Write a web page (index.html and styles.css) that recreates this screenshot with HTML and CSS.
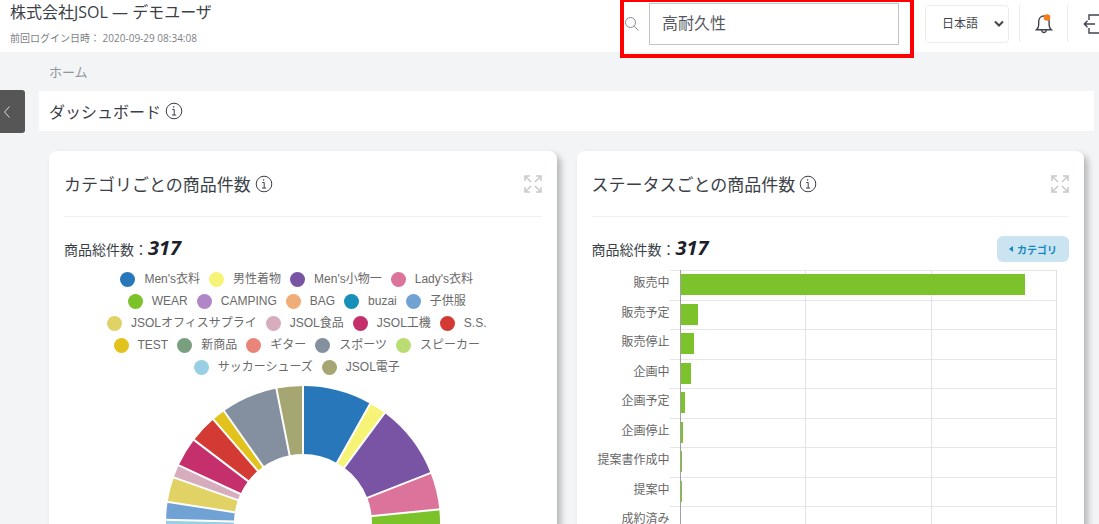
FILE: index.html
```html
<!DOCTYPE html>
<html lang="ja">
<head>
<meta charset="utf-8">
<title>ダッシュボード</title>
<link rel="stylesheet" href="styles.css">
</head>
<body>
<header class="topbar">
  <div class="brand">
    <div class="brand-name">株式会社JSOL — デモユーザ</div>
    <div class="last-login">前回ログイン日時： 2020-09-29 08:34:08</div>
  </div>
  <form class="search">
    <label for="q" aria-label="検索"><svg class="search-icon" width="16" height="16" viewBox="0 0 16 16"><circle cx="6.500" cy="6.500" r="5"/><path d="M10.200 10.200 14.500 14.500"/></svg></label>
    <input id="q" class="search-input" type="text" value="高耐久性">
  </form>
  <div class="lang">
    <select class="lang-select" aria-label="言語"><option>日本語</option></select>
    <svg class="lang-arrow" width="10" height="8" viewBox="0 0 10 8"><path d="M1 1.500 5 5.500 9 1.500"/></svg>
  </div>
  <button class="icon-btn bell" type="button" aria-label="通知">
    <svg width="18" height="20" viewBox="0 0 18 20"><path d="M1.500 15.800h14.800c-1.600-1.300-2.200-3-2.200-5V7.500c0-3-2-5.500-5.200-5.500S3.700 4.500 3.700 7.500v3.300c0 2-.6 3.700-2.200 5z"/><path d="M6.500 16c.2 1.600 1.100 2.500 2.400 2.500s2.200-.9 2.400-2.500"/><circle class="dot" cx="12" cy="3.500" r="3.300"/></svg>
  </button>
  <button class="icon-btn logout" type="button" aria-label="ログアウト">
    <svg width="26" height="20" viewBox="0 0 26 20"><path d="M6 6V1h18v18H6v-5"/><path d="M1.500 10H12M4.500 6.800 1.300 10l3.200 3.200"/></svg>
  </button>
</header>
<div class="layout">
  <aside class="side"><button class="side-toggle" type="button" aria-label="メニュー"><svg width="8" height="14" viewBox="0 0 8 14"><path d="M6.500 1.500 1.500 7l5 5.500"/></svg></button></aside>
  <main class="main">
    <nav class="crumb"><a href="#">ホーム</a></nav>
    <h1 class="page-title">ダッシュボード
      <svg class="info" width="18" height="18" viewBox="0 0 18 18"><circle cx="9" cy="9" r="7.800"/><path d="M7.300 7.500H9.200V13M7 13h4.200M8.700 4.200v1.600"/></svg></h1>
    <div class="cards">
      <section class="card">
        <div class="card-head">
          <h2>カテゴリごとの商品件数
            <svg class="info" width="18" height="18" viewBox="0 0 18 18"><circle cx="9" cy="9" r="7.800"/><path d="M7.300 7.500H9.200V13M7 13h4.200M8.700 4.200v1.600"/></svg></h2>
          <button class="expand" type="button" aria-label="拡大"><svg width="18" height="18" viewBox="0 0 18 18"><path d="M7 7 1 1M1 6V1h5M11 7l6-6M12 1h5v5M7 11l-6 6M1 12v5h5M11 11l6 6M12 17h5v-5"/></svg></button>
        </div>
        <div class="total"><p>商品総件数：<strong>317</strong></p></div>
        <ul class="legend">
          <li class="c1">Men's衣料</li><li class="c2">男性着物</li><li class="c3">Men's小物一</li><li class="c4">Lady's衣料</li>
          <li class="c5">WEAR</li><li class="c6">CAMPING</li><li class="c7">BAG</li><li class="c8">buzai</li><li class="c9">子供服</li>
          <li class="c10">JSOLオフィスサプライ</li><li class="c11">JSOL食品</li><li class="c12">JSOL工機</li><li class="c13">S.S.</li>
          <li class="c14">TEST</li><li class="c15">新商品</li><li class="c16">ギター</li><li class="c17">スポーツ</li><li class="c18">スピーカー</li>
          <li class="c19">サッカーシューズ</li><li class="c20">JSOL電子</li>
        </ul>
        <svg class="donut" width="276" height="276" viewBox="-138 -138 276 276" role="img" aria-label="カテゴリごとの商品件数">
          <g class="slices" transform="rotate(-90)">
            <circle class="c1" r="103" pathLength="360" stroke-dasharray="29.400 360"/>
            <circle class="c2" r="103" pathLength="360" stroke-dasharray="7.200 360" transform="rotate(29.400)"/>
            <circle class="c3" r="103" pathLength="360" stroke-dasharray="32 360" transform="rotate(36.600)"/>
            <circle class="c4" r="103" pathLength="360" stroke-dasharray="15.700 360" transform="rotate(68.600)"/>
            <circle class="c5" r="103" pathLength="360" stroke-dasharray="60 360" transform="rotate(84.300)"/>
            <circle class="c6" r="103" pathLength="360" stroke-dasharray="50 360" transform="rotate(144.300)"/>
            <circle class="c7" r="103" pathLength="360" stroke-dasharray="74 360" transform="rotate(194.300)"/>
            <circle class="c19" r="103" pathLength="360" stroke-dasharray="3 360" transform="rotate(268.300)"/>
            <circle class="c9" r="103" pathLength="360" stroke-dasharray="7.600 360" transform="rotate(271.300)"/>
            <circle class="c10" r="103" pathLength="360" stroke-dasharray="10.500 360" transform="rotate(278.900)"/>
            <circle class="c11" r="103" pathLength="360" stroke-dasharray="5.500 360" transform="rotate(289.400)"/>
            <circle class="c12" r="103" pathLength="360" stroke-dasharray="12.400 360" transform="rotate(294.900)"/>
            <circle class="c13" r="103" pathLength="360" stroke-dasharray="11.800 360" transform="rotate(307.300)"/>
            <circle class="c14" r="103" pathLength="360" stroke-dasharray="5.700 360" transform="rotate(319.100)"/>
            <circle class="c17" r="103" pathLength="360" stroke-dasharray="24 360" transform="rotate(324.800)"/>
            <circle class="c20" r="103" pathLength="360" stroke-dasharray="11.200 360" transform="rotate(348.800)"/>
          </g>
          <g class="cuts">
            <path d="M0-60V-138"/>
            <path d="M0-60V-138" transform="rotate(29.400)"/>
            <path d="M0-60V-138" transform="rotate(36.600)"/>
            <path d="M0-60V-138" transform="rotate(68.600)"/>
            <path d="M0-60V-138" transform="rotate(84.300)"/>
            <path d="M0-60V-138" transform="rotate(144.300)"/>
            <path d="M0-60V-138" transform="rotate(194.300)"/>
            <path d="M0-60V-138" transform="rotate(271.300)"/>
            <path d="M0-60V-138" transform="rotate(278.900)"/>
            <path d="M0-60V-138" transform="rotate(289.400)"/>
            <path d="M0-60V-138" transform="rotate(294.900)"/>
            <path d="M0-60V-138" transform="rotate(307.300)"/>
            <path d="M0-60V-138" transform="rotate(319.100)"/>
            <path d="M0-60V-138" transform="rotate(324.800)"/>
            <path d="M0-60V-138" transform="rotate(348.800)"/>
          </g>
        </svg>
      </section>
      <section class="card">
        <div class="card-head">
          <h2>ステータスごとの商品件数
            <svg class="info" width="18" height="18" viewBox="0 0 18 18"><circle cx="9" cy="9" r="7.800"/><path d="M7.300 7.500H9.200V13M7 13h4.200M8.700 4.200v1.600"/></svg></h2>
          <button class="expand" type="button" aria-label="拡大"><svg width="18" height="18" viewBox="0 0 18 18"><path d="M7 7 1 1M1 6V1h5M11 7l6-6M12 1h5v5M7 11l-6 6M1 12v5h5M11 11l6 6M12 17h5v-5"/></svg></button>
        </div>
        <div class="total"><p>商品総件数：<strong>317</strong></p>
          <button class="back" type="button"><svg width="4" height="6" viewBox="0 0 4 6"><path d="M4 0v6L0 3z"/></svg>カテゴリ</button></div>
        <div class="bars">
          <div class="labels">
            <span>販売中</span><span>販売予定</span><span>販売停止</span><span>企画中</span><span>企画予定</span><span>企画停止</span><span>提案書作成中</span><span>提案中</span><span>成約済み</span>
          </div>
          <div class="ticks"><i></i><i></i><i></i><i></i><i></i><i></i><i></i><i></i><i></i></div>
          <div class="plot">
            <div class="columns"><i></i><i></i><i></i></div>
            <div class="row"><b style="width:91.500%"></b></div>
            <div class="row"><b style="width:4.600%"></b></div>
            <div class="row"><b style="width:3.600%"></b></div>
            <div class="row"><b style="width:2.900%"></b></div>
            <div class="row"><b style="width:1.300%"></b></div>
            <div class="row"><b style="width:0.600%"></b></div>
            <div class="row"><b style="width:0.270%"></b></div>
            <div class="row"><b style="width:0.270%"></b></div>
            <div class="row"></div>
          </div>
        </div>
      </section>
    </div>
  </main>
</div>
</body>
</html>
```

FILE: styles.css
```css
* { box-sizing: border-box; }
body {
  margin: 0;
  height: 100vh;
  overflow: hidden;
  background: #f3f4f6;
  color: #3b3f48;
  font-family: "Open Sans", "Noto Sans CJK JP", sans-serif;
}
h1, h2, p, ul { margin: 0; padding: 0; font-weight: 400; }
button { border: 0; padding: 0; background: none; font-family: inherit; }
svg { display: block; fill: none; stroke: currentColor; }

.topbar {
  display: flex;
  align-items: flex-start;
  height: 52px;
  padding-left: 10px;
  background: #fff;
}
.brand { flex: 1; }
.brand-name { font-size: 16px; line-height: 24px; }
.last-login { margin-top: 6px; font-size: 10px; line-height: 16px; color: #7c7f86; }

.search { position: relative; display: flex; align-items: center; gap: 9px; padding: 3px 15px 0 4px; }
.search::after {
  content: "";
  position: absolute;
  inset: -2px 0 -13px 0;
  border: 4px solid #f00;
  pointer-events: none;
}
.search-icon { color: #8a8a8a; }
.search-input {
  width: 250px;
  height: 42px;
  padding: 0 12px 4px;
  border: 1px solid #c4c4c4;
  background: #fff;
  color: #55585f;
  font: 16px "Open Sans", "Noto Sans CJK JP", sans-serif;
}

.lang { position: relative; margin: 5px 10px 0 11px; }
.lang-select {
  appearance: none;
  width: 84px;
  height: 38px;
  padding: 0 16px 2px;
  border: 1px solid #ececee;
  border-radius: 4px;
  background: #fff;
  color: #44474e;
  font: 12px "Open Sans", "Noto Sans CJK JP", sans-serif;
}
.lang-arrow { position: absolute; right: 5px; top: 15px; stroke: #40444b; stroke-width: 2; }

.icon-btn {
  display: flex;
  align-items: center;
  height: 37px;
  margin-top: 5px;
  border-left: 1px solid #ececee;
  color: #3f434b;
}
.icon-btn svg { flex: none; stroke-width: 1.4; }
.bell { width: 48px; padding-left: 15px; }
.bell svg .dot { fill: #ee7f1a; stroke: none; }
.logout { width: 32px; padding-left: 15px; overflow: hidden; }

.layout { display: flex; }
.side { flex: none; width: 39px; padding-top: 38px; }
.side-toggle {
  display: flex;
  align-items: center;
  width: 25px;
  height: 43px;
  padding-left: 3px;
  border-radius: 0 3px 3px 0;
  background: #565656;
  color: #ddd;
}
.main { flex: 1; min-width: 0; padding-right: 5px; }
.crumb { padding: 10px 10px 9px; font-size: 13px; line-height: 20px; }
.crumb a { color: #8f939b; text-decoration: none; }
.page-title {
  display: flex;
  align-items: center;
  gap: 4px;
  height: 40px;
  padding-left: 10px;
  background: #fff;
  font-size: 16px;
}

.cards { display: grid; grid-template-columns: 1fr 1fr; gap: 20px; padding: 20px 10px 0; }
.card {
  min-width: 0;
  padding: 0 15px 20px;
  border-radius: 8px;
  background: #fff;
  box-shadow: 4px 4px 6px rgba(0, 0, 0, .25);
}
.card-head {
  display: flex;
  align-items: center;
  justify-content: space-between;
  height: 66px;
  border-bottom: 1px solid #f1f1f2;
}
.card-head h2 { display: flex; align-items: center; gap: 4px; font-size: 17px; }
.expand { color: #c9c9c9; }
.expand svg { stroke-width: 1.5; }

.total { display: flex; align-items: center; justify-content: space-between; height: 51px; padding-top: 13px; }
.total p { font-size: 14px; line-height: 24px; }
.total strong { color: #1d2028; font-size: 20px; font-style: italic; }
.back {
  display: flex;
  align-items: center;
  justify-content: center;
  gap: 4px;
  width: 72px;
  height: 26px;
  border-radius: 6px;
  background: #cbe4f1;
  color: #1489bd;
  font-size: 10px;
  font-weight: 700;
}
.back svg { fill: currentColor; stroke: none; }

.legend {
  display: flex;
  flex-wrap: wrap;
  justify-content: center;
  column-gap: 9px;
  max-width: 412px;
  margin: 0 auto;
  padding-right: 12px;
  list-style: none;
  color: #6a6a6a;
  font: 12px/22px "Liberation Sans", "Noto Sans CJK JP", sans-serif;
}
.legend li { display: flex; align-items: center; gap: 9px; height: 22px; }
.legend li::before { content: ""; width: 15px; height: 15px; border-radius: 50%; background: var(--c); }
.donut { margin: 7px auto 0; }
.slices circle { stroke: var(--c); stroke-width: 68; }
.cuts { stroke: #fff; stroke-width: 2; }
.c1 { --c: #2877bb; }
.c2 { --c: #f7f376; }
.c3 { --c: #7953a4; }
.c4 { --c: #db739b; }
.c5 { --c: #7cc22a; }
.c6 { --c: #b086c8; }
.c7 { --c: #f0ad78; }
.c8 { --c: #1690b9; }
.c9 { --c: #71a2d4; }
.c10 { --c: #e1d265; }
.c11 { --c: #d7adbe; }
.c12 { --c: #c5306c; }
.c13 { --c: #d33a33; }
.c14 { --c: #e2c21d; }
.c15 { --c: #7a9f7e; }
.c16 { --c: #e88578; }
.c17 { --c: #8490a0; }
.c18 { --c: #b9dd73; }
.c19 { --c: #99cfe4; }
.c20 { --c: #a6a672; }

.bars { display: flex; height: 266px; padding-right: 12px; margin-top: 2px; }
.labels, .ticks, .plot { display: grid; grid-template-rows: repeat(9, 1fr); }
.labels {
  width: 78px;
  color: #666;
  font: 12px/26px "Liberation Sans", "Noto Sans CJK JP", sans-serif;
  text-align: right;
}
.ticks { width: 10px; }
.ticks i, .row { border-top: 1px solid #e6e6e6; }
.plot { position: relative; flex: 1; border-left: 1px solid #a0a0a0; }
.row { padding-top: 3px; }
.row b { position: relative; display: block; height: 21px; background: #7cc22a; }
.columns { position: absolute; inset: 0; display: grid; grid-template-columns: repeat(3, 1fr); }
.columns i { border-right: 1px solid #e2e2e2; }
```
